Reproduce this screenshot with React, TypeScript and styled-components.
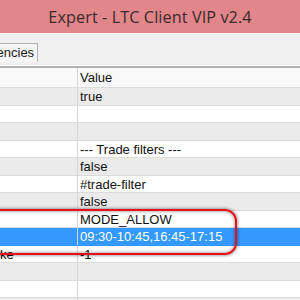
import styled, { createGlobalStyle } from 'styled-components';

const GlobalStyle = createGlobalStyle`
	html, body {
		margin: 0;
		padding: 0;
		background: #f0f0f0;
		overflow: hidden;
	}
	body {
		width: 300px;
		height: 300px;
	}
`;

const Window = styled.div`
	position: relative;
	width: 300px;
	height: 300px;
	overflow: hidden;
	display: flex;
	flex-direction: column;
	font-family: 'Liberation Sans', Arial, sans-serif;
`;

const TitleBar = styled.div`
	height: 33px;
	flex-shrink: 0;
	background: #e1868a;
	display: flex;
	align-items: center;
	justify-content: center;
	padding-top: 1px;
	box-sizing: border-box;
	font-family: 'Open Sans', 'Noto Sans', sans-serif;
	font-size: 16.2px;
	color: #3a2a2a;
	letter-spacing: 0.1px;
`;

const TabStrip = styled.div`
	height: 33px;
	flex-shrink: 0;
	background: #f0f0f0;
	display: flex;
	align-items: flex-start;
	padding-top: 10px;
	box-sizing: border-box;
	border-bottom: 1px solid #ffffff;
`;

const Tab = styled.div`
	height: 17px;
	padding: 0 3px 0 4px;
	margin-left: -54px;
	background: #f4f4f4;
	border: 1px solid #b4b4b4;
	border-bottom-color: #f4f4f4;
	display: flex;
	align-items: center;
	font-size: 13px;
	color: #1a1a1a;
`;

const Grid = styled.div`
	flex: 1;
	background: #ffffff;
	border-top: 2px solid #b2b2b2;
	display: flex;
	flex-direction: column;
`;

const Row = styled.div<{ $tone: 'head' | 'white' | 'gray' | 'sel' }>`
	display: grid;
	grid-template-columns: 78px 1fr;
	height: 17.5px;
	flex-shrink: 0;
	border-bottom: 1px solid ${({ $tone }) => ($tone === 'sel' ? '#3399ff' : '#dcdcdc')};
	background: ${({ $tone }) =>
		$tone === 'head' ? '#f9f9f9' : $tone === 'gray' ? '#ebebeb' : $tone === 'sel' ? '#3399ff' : '#ffffff'};
	color: ${({ $tone }) => ($tone === 'sel' ? '#ffffff' : '#111111')};
	font-size: 13px;
	line-height: 17px;
	box-sizing: border-box;
	${({ $tone }) => ($tone === 'head' ? 'height: 20px; line-height: 20px;' : '')}
`;

const NameCell = styled.div<{ $flush?: boolean }>`
	padding-left: ${({ $flush }) => ($flush ? '0' : '4px')};
	border-right: 1px solid #d6d6d6;
	white-space: nowrap;
	overflow: hidden;
`;

const ValueCell = styled.div`
	padding-left: 2px;
	white-space: nowrap;
	overflow: hidden;
`;

const Highlight = styled.div`
	position: absolute;
	left: -20px;
	top: 209px;
	width: 253px;
	height: 42px;
	border: 2.5px solid #e8101a;
	border-radius: 12px;
	box-shadow: 0 0 3px 1px rgba(0, 0, 0, 0.35), inset 0 0 3px 1px rgba(0, 0, 0, 0.3);
	pointer-events: none;
`;

type Item = { name?: string; value?: string; tone: 'white' | 'gray' | 'sel'; flush?: boolean };

const rows: Item[] = [
	{ value: 'true', tone: 'gray' },
	{ tone: 'white' },
	{ tone: 'gray' },
	{ value: '--- Trade filters ---', tone: 'white' },
	{ value: 'false', tone: 'gray' },
	{ value: '#trade-filter', tone: 'white' },
	{ value: 'false', tone: 'gray' },
	{ value: 'MODE_ALLOW', tone: 'white' },
	{ value: '09:30-10:45,16:45-17:15', tone: 'sel' },
	{ name: 'ke', value: '-1', tone: 'white', flush: true },
	{ tone: 'gray' },
	{ tone: 'white' },
	{ tone: 'gray' },
];

export default function App() {
	return (
		<>
			<GlobalStyle />
			<Window>
				<TitleBar>Expert - LTC Client VIP v2.4</TitleBar>
				<TabStrip>
					<Tab>Dependencies</Tab>
				</TabStrip>
				<Grid>
					<Row $tone="head">
						<NameCell />
						<ValueCell>Value</ValueCell>
					</Row>
					{rows.map((r, i) => (
						<Row key={i} $tone={r.tone}>
							<NameCell $flush={r.flush}>{r.name}</NameCell>
							<ValueCell>{r.value}</ValueCell>
						</Row>
					))}
				</Grid>
				<Highlight />
			</Window>
		</>
	);
}
